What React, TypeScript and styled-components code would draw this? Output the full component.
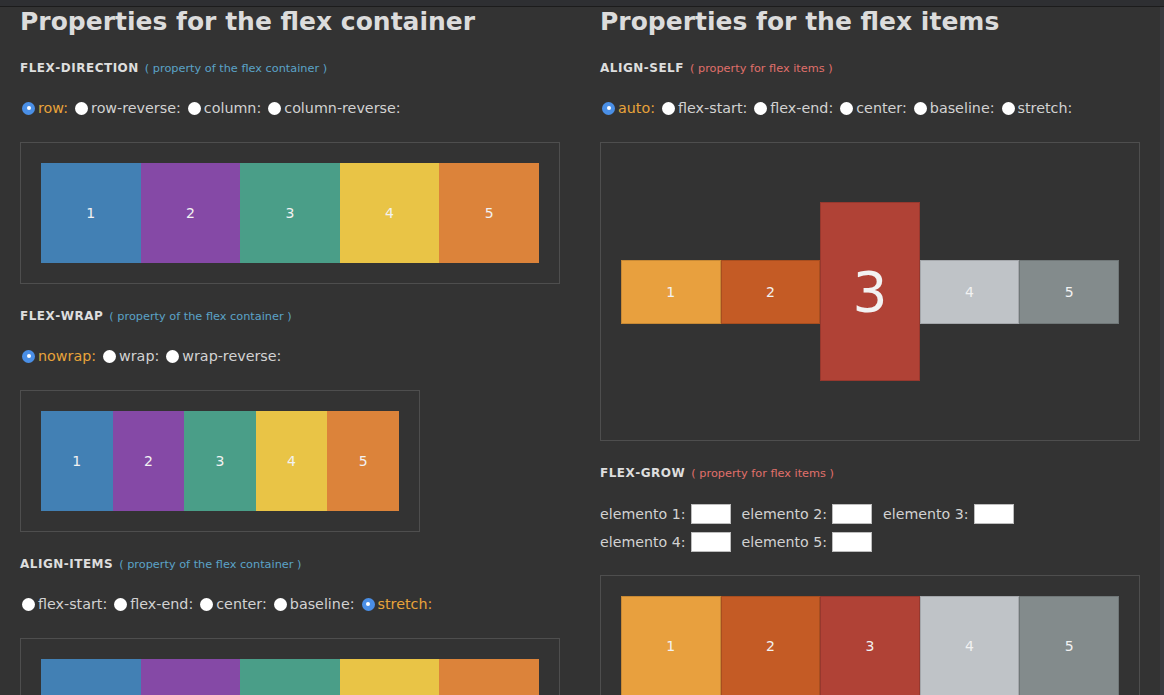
import React from "react";
import styled, { createGlobalStyle } from "styled-components";

const GlobalStyle = createGlobalStyle`
  html, body {
    margin: 0;
    padding: 0;
    height: 100%;
    overflow: hidden;
    background: #333333;
  }
  body {
    font-family: "DejaVu Sans", Verdana, sans-serif;
  }
  #root { height: 100%; }
`;

const Page = styled.div`
  display: flex;
  flex-direction: column;
  height: 100vh;
  background: #333333;
`;

const TopBar = styled.div`
  height: 6px;
  flex: none;
  background: #2e2f32;
  border-bottom: 1px solid #1c1c1c;
`;

const Main = styled.div`
  display: flex;
  flex: 1;
  min-height: 0;
  overflow: hidden;
`;

const Columns = styled.div`
  flex: 1;
  display: grid;
  grid-template-columns: 1fr 1fr;
  min-width: 0;
`;

const ScrollStrip = styled.div`
  width: 4px;
  flex: none;
  background: #3a3b40;
`;

const Column = styled.section`
  padding: 0 20px;
  min-width: 0;
`;

const Heading = styled.h1`
  margin: 0 0 23px;
  font-size: 25px;
  line-height: 30px;
  font-weight: bold;
  color: #dcdcdc;
  white-space: nowrap;
`;

const Label = styled.div`
  display: flex;
  align-items: baseline;
  height: 16px;
  line-height: 16px;
  margin-bottom: 22px;
  font-size: 12px;
  font-weight: bold;
  letter-spacing: 0.5px;
  color: #dedede;
  white-space: nowrap;
`;

const Hint = styled.span<{ $color: string }>`
  margin-left: 6px;
  font-size: 11.3px;
  font-weight: normal;
  letter-spacing: 0;
  color: ${(p) => p.$color};
`;

const RadioRow = styled.div`
  display: flex;
  align-items: center;
  height: 20px;
  margin-bottom: 24px;
  font-size: 14.3px;
  color: #d2d2d2;
  white-space: nowrap;
`;

const Option = styled.label<{ $active?: boolean }>`
  display: inline-flex;
  align-items: center;
  gap: 3px;
  margin-right: 5px;
  color: ${(p) => (p.$active ? "#e8a33a" : "#d2d2d2")};
`;

const Radio = styled.span<{ $active?: boolean }>`
  width: 13px;
  height: 13px;
  margin-left: 2px;
  border-radius: 50%;
  box-sizing: border-box;
  background: ${(p) => (p.$active ? "#4a8fe6" : "#ffffff")};
  display: inline-flex;
  align-items: center;
  justify-content: center;
  &::after {
    content: "";
    width: 4px;
    height: 4px;
    border-radius: 50%;
    background: #ffffff;
    display: ${(p) => (p.$active ? "block" : "none")};
  }
`;

const Box = styled.div<{ $width: number; $height: number; $align?: string }>`
  box-sizing: border-box;
  width: ${(p) => p.$width}px;
  height: ${(p) => p.$height}px;
  border: 1px solid #4e4e4e;
  padding: 20px;
  display: flex;
  align-items: ${(p) => p.$align || "stretch"};
  margin-bottom: 24px;
`;

const Item = styled.div<{ $bg: string; $h?: number; $big?: boolean; $edge?: boolean }>`
  flex: 1 1 0;
  min-width: 0;
  height: ${(p) => (p.$h ? `${p.$h}px` : "auto")};
  background: ${(p) => p.$bg};
  color: #f2f2f2;
  font-size: ${(p) => (p.$big ? "55px" : "14px")};
  display: flex;
  align-items: center;
  justify-content: center;
  box-shadow: ${(p) => (p.$edge ? "inset 0 0 0 1px rgba(0,0,0,0.14)" : "none")};
`;

const GrowRows = styled.div`
  margin-top: -3px;
  margin-bottom: 19px;
`;

const GrowRow = styled.div`
  display: flex;
  align-items: center;
  height: 28px;
  font-size: 14.2px;
  color: #d2d2d2;
  white-space: nowrap;
`;

const Field = styled.label`
  display: inline-flex;
  align-items: center;
  gap: 5px;
  margin-right: 11px;
`;

const NumInput = styled.input`
  box-sizing: border-box;
  width: 40px;
  height: 20px;
  margin: 0;
  padding: 0 2px;
  border: 1px solid #bdbdbd;
  background: #ffffff;
  outline: none;
`;

const blue = "#5ba3c8";
const red = "#e0706b";

const leftColors = ["#4280b4", "#8549a6", "#4a9e88", "#e9c446", "#dc833a"];
const rightColors = ["#e8a03e", "#c45b25", "#b04236", "#bfc3c7", "#838b8c"];

type Opt = { name: string; active?: boolean };

const RadioGroup = ({ options }: { options: Opt[] }) => (
  <RadioRow>
    {options.map((o) => (
      <Option key={o.name} $active={o.active}>
        <Radio $active={o.active} />
        {o.name}:
      </Option>
    ))}
  </RadioRow>
);

export default function App() {
  return (
    <Page>
      <GlobalStyle />
      <TopBar />
      <Main>
        <Columns>
          <Column>
            <Heading>Properties for the flex container</Heading>

            <Label>
              FLEX‑DIRECTION<Hint $color={blue}>( property of the flex container )</Hint>
            </Label>
            <RadioGroup
              options={[
                { name: "row", active: true },
                { name: "row-reverse" },
                { name: "column" },
                { name: "column-reverse" },
              ]}
            />
            <Box $width={540} $height={142}>
              {leftColors.map((c, i) => (
                <Item key={c} $bg={c}>
                  {i + 1}
                </Item>
              ))}
            </Box>

            <Label>
              FLEX‑WRAP<Hint $color={blue}>( property of the flex container )</Hint>
            </Label>
            <RadioGroup
              options={[{ name: "nowrap", active: true }, { name: "wrap" }, { name: "wrap-reverse" }]}
            />
            <Box $width={400} $height={142}>
              {leftColors.map((c, i) => (
                <Item key={c} $bg={c}>
                  {i + 1}
                </Item>
              ))}
            </Box>

            <Label>
              ALIGN‑ITEMS<Hint $color={blue}>( property of the flex container )</Hint>
            </Label>
            <RadioGroup
              options={[
                { name: "flex-start" },
                { name: "flex-end" },
                { name: "center" },
                { name: "baseline" },
                { name: "stretch", active: true },
              ]}
            />
            <Box $width={540} $height={142}>
              {leftColors.map((c, i) => (
                <Item key={c} $bg={c}>
                  {i + 1}
                </Item>
              ))}
            </Box>
          </Column>

          <Column>
            <Heading>Properties for the flex items</Heading>

            <Label>
              ALIGN‑SELF<Hint $color={red}>( property for flex items )</Hint>
            </Label>
            <RadioGroup
              options={[
                { name: "auto", active: true },
                { name: "flex-start" },
                { name: "flex-end" },
                { name: "center" },
                { name: "baseline" },
                { name: "stretch" },
              ]}
            />
            <Box $width={540} $height={299} $align="center">
              {rightColors.map((c, i) => (
                <Item key={c} $bg={c} $h={i === 2 ? 179 : 64} $big={i === 2} $edge>
                  {i + 1}
                </Item>
              ))}
            </Box>

            <Label>
              FLEX‑GROW<Hint $color={red}>( property for flex items )</Hint>
            </Label>
            <GrowRows>
              <GrowRow>
                {[1, 2, 3].map((n) => (
                  <Field key={n}>
                    elemento {n}:
                    <NumInput type="text" />
                  </Field>
                ))}
              </GrowRow>
              <GrowRow>
                {[4, 5].map((n) => (
                  <Field key={n}>
                    elemento {n}:
                    <NumInput type="text" />
                  </Field>
                ))}
              </GrowRow>
            </GrowRows>
            <Box $width={540} $height={142}>
              {rightColors.map((c, i) => (
                <Item key={c} $bg={c} $edge>
                  {i + 1}
                </Item>
              ))}
            </Box>
          </Column>
        </Columns>
        <ScrollStrip />
      </Main>
    </Page>
  );
}
